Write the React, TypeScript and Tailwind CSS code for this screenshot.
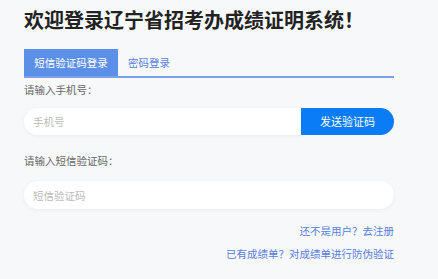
export default function App() {
  return (
    <div
      className="w-[438px] h-[279px] bg-[#f7f8fa] overflow-hidden text-[#333]"
      style={{ fontFamily: '"Noto Sans CJK SC", "Noto Sans", sans-serif' }}
    >
      <div className="w-[370px] ml-[24px] pt-[5px]">
        {/* title */}
        <h1 className="text-[20px] leading-[30px] font-bold text-[#222]">
          欢迎登录辽宁省招考办成绩证明系统！
        </h1>

        {/* tabs */}
        <div className="mt-[14px] flex items-end border-b-2 border-[#7f9fe6]">
          <div className="h-[27px] w-[94px] justify-center bg-[#5b8fe8] text-white text-[10.5px] flex items-center">
            短信验证码登录
          </div>
          <div className="h-[27px] px-[10px] text-[#5b7fe0] text-[10.5px] flex items-center">
            密码登录
          </div>
        </div>

        {/* phone */}
        <p className="mt-[5px] text-[10.5px] leading-[14px] text-[#666]">请输入手机号：</p>
        <div className="mt-[11px] flex h-[27px]">
          <input
            placeholder="手机号"
            className="flex-1 min-w-0 bg-white rounded-l-full pl-[9px] text-[10.5px] outline-none placeholder:text-[#bbb] shadow-[0_1px_4px_rgba(0,0,0,0.06)]"
          />
          <button className="w-[93px] bg-[#0a7cf6] text-white text-[11px] rounded-r-full">
            发送验证码
          </button>
        </div>

        {/* sms code */}
        <p className="mt-[19px] text-[10.5px] leading-[14px] text-[#666]">请输入短信验证码：</p>
        <input
          placeholder="短信验证码"
          className="mt-[13px] w-full h-[28px] bg-white rounded-full pl-[9px] text-[10.5px] outline-none placeholder:text-[#bbb] shadow-[0_1px_4px_rgba(0,0,0,0.06)]"
        />

        {/* links */}
        <div className="mt-[15px] flex flex-col items-end gap-[9px] text-[10.5px] leading-[14px] text-[#5a7de0]">
          <a>还不是用户？去注册</a>
          <a>已有成绩单？对成绩单进行防伪验证</a>
        </div>
      </div>
    </div>
  );
}
